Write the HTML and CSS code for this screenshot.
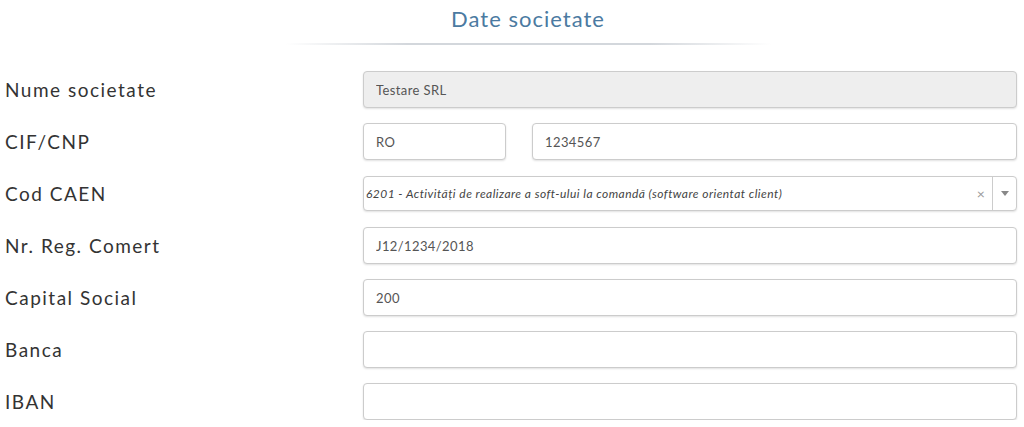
FILE: index.html
```html
<!DOCTYPE html>
<html lang="ro">
<head>
    <meta charset="UTF-8">
    <meta name="viewport" content="width=device-width, initial-scale=1.0">
    <title>Date societate</title>
    <link rel="stylesheet" href="styles.css">
</head>
<body>
    <div class="section-head">
        <h2>Date societate</h2>
        <div class="head-line"></div>
    </div>

    <form class="company-form">
        <div class="form-row">
            <label>Nume societate</label>
            <div class="field"><input type="text" class="readonly" value="Testare SRL" readonly></div>
        </div>
        <div class="form-row">
            <label>CIF/CNP</label>
            <div class="field field-split">
                <input type="text" class="prefix" value="RO">
                <input type="text" value="1234567">
            </div>
        </div>
        <div class="form-row">
            <label>Cod CAEN</label>
            <div class="field">
                <div class="select-box">
                    <span class="select-value">6201 - Activități de realizare a soft-ului la comandă (software orientat client)</span>
                    <span class="select-clear">×</span>
                    <span class="select-arrow"></span>
                </div>
            </div>
        </div>
        <div class="form-row">
            <label>Nr. Reg. Comert</label>
            <div class="field"><input type="text" value="J12/1234/2018"></div>
        </div>
        <div class="form-row">
            <label>Capital Social</label>
            <div class="field"><input type="text" value="200"></div>
        </div>
        <div class="form-row">
            <label>Banca</label>
            <div class="field"><input type="text" value=""></div>
        </div>
        <div class="form-row">
            <label>IBAN</label>
            <div class="field"><input type="text" value=""></div>
        </div>
    </form>
</body>
</html>
```

FILE: styles.css
```css
body {
    margin: 0;
    background-color: #fff;
    color: #333;
    font-family: "Lato", "Open Sans", sans-serif;
}

.section-head {
    padding-left: 32px;
    text-align: center;
}

.section-head h2 {
    margin: 0;
    padding-top: 6px;
    font-size: 22px;
    font-weight: normal;
    letter-spacing: 1px;
    color: #4b7aa1;
    line-height: 26px;
}

.head-line {
    width: 485px;
    height: 2px;
    margin: 11px auto 0;
    background: linear-gradient(to right, rgba(200, 205, 212, 0), #d3d7dc 25%, #d3d7dc 75%, rgba(200, 205, 212, 0));
}

.company-form {
    display: flex;
    flex-direction: column;
    gap: 15px;
    padding: 26px 7px 0 5px;
}

.form-row {
    display: grid;
    grid-template-columns: 358px 1fr;
    align-items: center;
    height: 37px;
}

.form-row label {
    font-size: 19px;
    letter-spacing: 1.5px;
    color: #333;
}

.field-split {
    display: grid;
    grid-template-columns: 143px 1fr;
    gap: 26px;
}

input,
.select-box {
    box-sizing: border-box;
    width: 100%;
    height: 37px;
    padding: 0 12px;
    border: 1px solid #ccc;
    border-radius: 4px;
    box-shadow: 0 1px 2px rgba(0, 0, 0, 0.12);
    background: #fff;
    font-family: "Lato", "Open Sans", sans-serif;
    font-size: 13px;
    letter-spacing: 0.4px;
    color: #555;
    outline: none;
}

input.readonly {
    background: #eee;
}

.select-box {
    display: flex;
    align-items: center;
    height: 35px;
    padding: 0;
}

.select-value {
    flex: 1;
    padding-left: 2px;
    font-size: 12px;
    font-style: italic;
    letter-spacing: 0.45px;
    color: #444;
    white-space: nowrap;
    overflow: hidden;
}

.select-clear {
    width: 22px;
    font-size: 14px;
    color: #999;
    text-align: center;
}

.select-arrow {
    position: relative;
    width: 23px;
    height: 100%;
    border-left: 1px solid #ccc;
}

.select-arrow::after {
    content: "";
    position: absolute;
    top: 14px;
    left: 8px;
    border-left: 4px solid transparent;
    border-right: 4px solid transparent;
    border-top: 5px solid #888;
}
```
